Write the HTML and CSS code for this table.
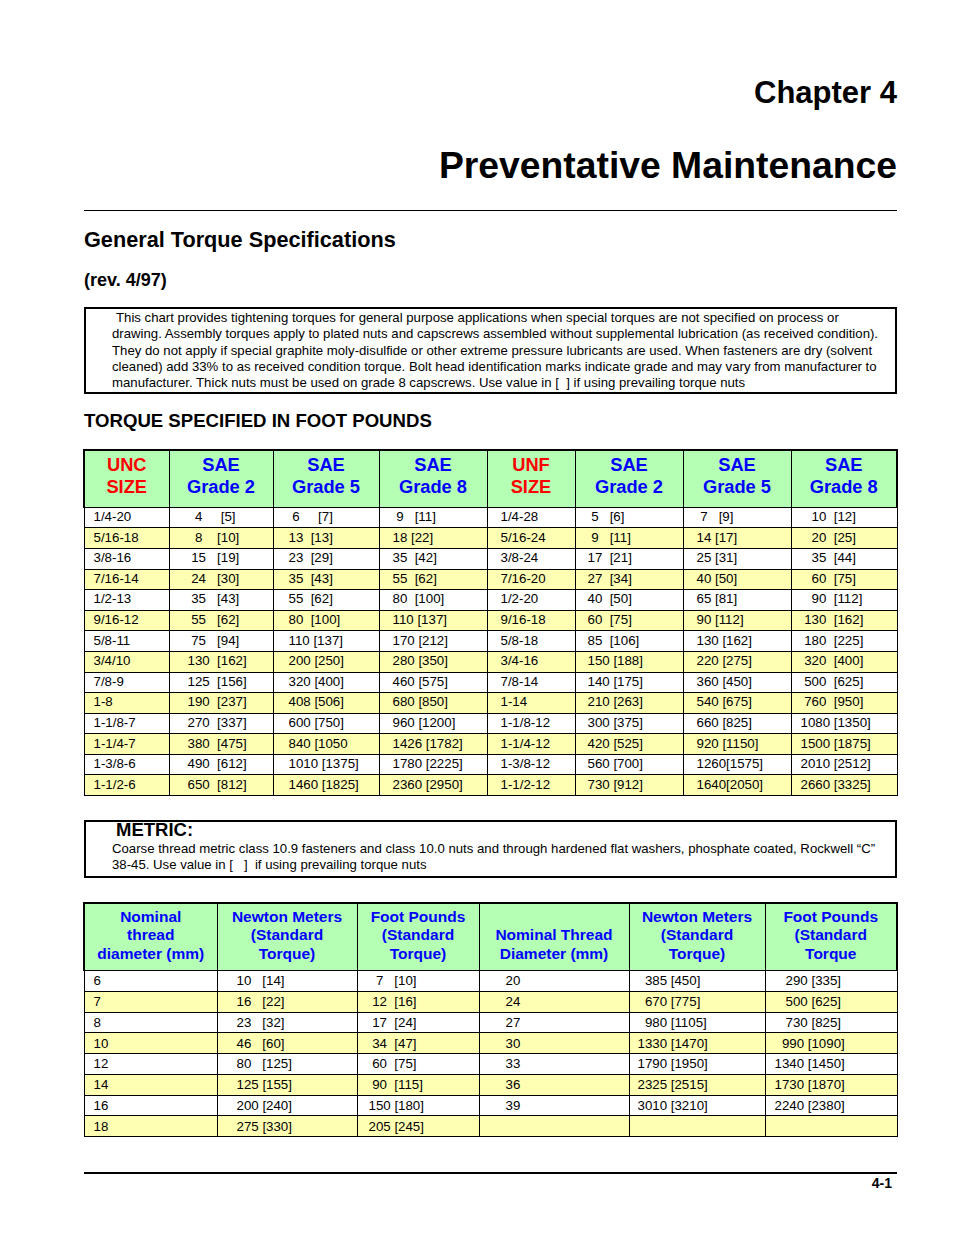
FILE: index.html
```html
<!DOCTYPE html>
<html lang="en">
<head>
<meta charset="utf-8">
<title>Chapter 4 - Preventative Maintenance</title>
<link rel="stylesheet" href="styles.css">
</head>
<body>
<div class="page">
  <header class="chapter-head">
    <div class="chapter">Chapter 4</div>
    <h1 class="title">Preventative Maintenance</h1>
  </header>
  <hr class="rule">
  <h2 class="section">General Torque Specifications</h2>
  <div class="rev">(rev. 4/97)</div>
  <div class="note">
    <p>This chart provides tightening torques for general purpose applications when special torques are not specified on process or<br>drawing. Assembly torques apply to plated nuts and capscrews assembled without supplemental lubrication (as received condition).<br>They do not apply if special graphite moly-disulfide or other extreme pressure lubricants are used. When fasteners are dry (solvent<br>cleaned) add 33% to as received condition torque. Bolt head identification marks indicate grade and may vary from manufacturer to<br>manufacturer. Thick nuts must be used on grade 8 capscrews. Use value in [&nbsp; ] if using prevailing torque nuts</p>
  </div>
  <h3 class="subhead">TORQUE SPECIFIED IN FOOT POUNDS</h3>

  <table class="torque t1">
    <colgroup>
      <col style="width:85px"><col style="width:104px"><col style="width:106px"><col style="width:108px">
      <col style="width:88px"><col style="width:108px"><col style="width:108px"><col style="width:106px">
    </colgroup>
    <thead>
      <tr>
        <th class="red">UNC<br>SIZE</th>
        <th>SAE<br>Grade 2</th>
        <th>SAE<br>Grade 5</th>
        <th>SAE<br>Grade 8</th>
        <th class="red">UNF<br>SIZE</th>
        <th>SAE<br>Grade 2</th>
        <th>SAE<br>Grade 5</th>
        <th>SAE<br>Grade 8</th>
      </tr>
    </thead>
    <tbody>
      <tr><td class="c1">1/4-20</td><td class="c2">  4     [5]</td><td class="c3"> 6     [7]</td><td class="c4"> 9   [11]</td><td class="c5">1/4-28</td><td class="c6"> 5   [6]</td><td class="c7"> 7   [9]</td><td class="c8">   10  [12]</td></tr>
      <tr><td class="c1">5/16-18</td><td class="c2">  8    [10]</td><td class="c3">13  [13]</td><td class="c4">18 [22]</td><td class="c5">5/16-24</td><td class="c6"> 9   [11]</td><td class="c7">14 [17]</td><td class="c8">   20  [25]</td></tr>
      <tr><td class="c1">3/8-16</td><td class="c2"> 15   [19]</td><td class="c3">23  [29]</td><td class="c4">35  [42]</td><td class="c5">3/8-24</td><td class="c6">17  [21]</td><td class="c7">25 [31]</td><td class="c8">   35  [44]</td></tr>
      <tr><td class="c1">7/16-14</td><td class="c2"> 24   [30]</td><td class="c3">35  [43]</td><td class="c4">55  [62]</td><td class="c5">7/16-20</td><td class="c6">27  [34]</td><td class="c7">40 [50]</td><td class="c8">   60  [75]</td></tr>
      <tr><td class="c1">1/2-13</td><td class="c2"> 35   [43]</td><td class="c3">55  [62]</td><td class="c4">80  [100]</td><td class="c5">1/2-20</td><td class="c6">40  [50]</td><td class="c7">65 [81]</td><td class="c8">   90  [112]</td></tr>
      <tr><td class="c1">9/16-12</td><td class="c2"> 55   [62]</td><td class="c3">80  [100]</td><td class="c4">110 [137]</td><td class="c5">9/16-18</td><td class="c6">60  [75]</td><td class="c7">90 [112]</td><td class="c8"> 130  [162]</td></tr>
      <tr><td class="c1">5/8-11</td><td class="c2"> 75   [94]</td><td class="c3">110 [137]</td><td class="c4">170 [212]</td><td class="c5">5/8-18</td><td class="c6">85  [106]</td><td class="c7">130 [162]</td><td class="c8"> 180  [225]</td></tr>
      <tr><td class="c1">3/4/10</td><td class="c2">130  [162]</td><td class="c3">200 [250]</td><td class="c4">280 [350]</td><td class="c5">3/4-16</td><td class="c6">150 [188]</td><td class="c7">220 [275]</td><td class="c8"> 320  [400]</td></tr>
      <tr><td class="c1">7/8-9</td><td class="c2">125  [156]</td><td class="c3">320 [400]</td><td class="c4">460 [575]</td><td class="c5">7/8-14</td><td class="c6">140 [175]</td><td class="c7">360 [450]</td><td class="c8"> 500  [625]</td></tr>
      <tr><td class="c1">1-8</td><td class="c2">190  [237]</td><td class="c3">408 [506]</td><td class="c4">680 [850]</td><td class="c5">1-14</td><td class="c6">210 [263]</td><td class="c7">540 [675]</td><td class="c8"> 760  [950]</td></tr>
      <tr><td class="c1">1-1/8-7</td><td class="c2">270  [337]</td><td class="c3">600 [750]</td><td class="c4">960 [1200]</td><td class="c5">1-1/8-12</td><td class="c6">300 [375]</td><td class="c7">660 [825]</td><td class="c8">1080 [1350]</td></tr>
      <tr><td class="c1">1-1/4-7</td><td class="c2">380  [475]</td><td class="c3">840 [1050</td><td class="c4">1426 [1782]</td><td class="c5">1-1/4-12</td><td class="c6">420 [525]</td><td class="c7">920 [1150]</td><td class="c8">1500 [1875]</td></tr>
      <tr><td class="c1">1-3/8-6</td><td class="c2">490  [612]</td><td class="c3">1010 [1375]</td><td class="c4">1780 [2225]</td><td class="c5">1-3/8-12</td><td class="c6">560 [700]</td><td class="c7">1260[1575]</td><td class="c8">2010 [2512]</td></tr>
      <tr><td class="c1">1-1/2-6</td><td class="c2">650  [812]</td><td class="c3">1460 [1825]</td><td class="c4">2360 [2950]</td><td class="c5">1-1/2-12</td><td class="c6">730 [912]</td><td class="c7">1640[2050]</td><td class="c8">2660 [3325]</td></tr>
    </tbody>
  </table>

  <div class="note metric">
    <div class="metric-title">METRIC:</div>
    <p>Coarse thread metric class 10.9 fasteners and class 10.0 nuts and through hardened flat washers, phosphate coated, Rockwell “C”<br>38-45. Use value in [&nbsp;&nbsp; ]&nbsp; if using prevailing torque nuts</p>
  </div>

  <table class="torque t2">
    <colgroup>
      <col style="width:133px"><col style="width:140px"><col style="width:122px">
      <col style="width:150px"><col style="width:136px"><col style="width:132px">
    </colgroup>
    <thead>
      <tr>
        <th>Nominal<br>thread<br>diameter (mm)</th>
        <th>Newton Meters<br>(Standard<br>Torque)</th>
        <th>Foot Pounds<br>(Standard<br>Torque)</th>
        <th>Nominal Thread<br>Diameter (mm)</th>
        <th>Newton Meters<br>(Standard<br>Torque)</th>
        <th>Foot Pounds<br>(Standard<br>Torque</th>
      </tr>
    </thead>
    <tbody>
      <tr><td class="m1">6</td><td class="m2">10   [14]</td><td class="m3">  7   [10]</td><td class="m4">20</td><td class="m5">  385 [450]</td><td class="m6">   290 [335]</td></tr>
      <tr><td class="m1">7</td><td class="m2">16   [22]</td><td class="m3"> 12  [16]</td><td class="m4">24</td><td class="m5">  670 [775]</td><td class="m6">   500 [625]</td></tr>
      <tr><td class="m1">8</td><td class="m2">23   [32]</td><td class="m3"> 17  [24]</td><td class="m4">27</td><td class="m5">  980 [1105]</td><td class="m6">   730 [825]</td></tr>
      <tr><td class="m1">10</td><td class="m2">46   [60]</td><td class="m3"> 34  [47]</td><td class="m4">30</td><td class="m5">1330 [1470]</td><td class="m6">  990 [1090]</td></tr>
      <tr><td class="m1">12</td><td class="m2">80   [125]</td><td class="m3"> 60  [75]</td><td class="m4">33</td><td class="m5">1790 [1950]</td><td class="m6">1340 [1450]</td></tr>
      <tr><td class="m1">14</td><td class="m2">125 [155]</td><td class="m3"> 90  [115]</td><td class="m4">36</td><td class="m5">2325 [2515]</td><td class="m6">1730 [1870]</td></tr>
      <tr><td class="m1">16</td><td class="m2">200 [240]</td><td class="m3">150 [180]</td><td class="m4">39</td><td class="m5">3010 [3210]</td><td class="m6">2240 [2380]</td></tr>
      <tr><td class="m1">18</td><td class="m2">275 [330]</td><td class="m3">205 [245]</td><td class="m4"></td><td class="m5"></td><td class="m6"></td></tr>
    </tbody>
  </table>

  <footer class="page-foot">
    <div class="page-num">4-1</div>
  </footer>
</div>
</body>
</html>
```
FILE: styles.css
```css
* { box-sizing: border-box; }

html, body {
  margin: 0;
  padding: 0;
  background: #ffffff;
}

body {
  font-family: "Liberation Sans", Arial, Helvetica, sans-serif;
  color: #000;
}

.page {
  width: 954px;
  padding: 76px 57px 0 84px;
}

.chapter-head {
  text-align: right;
}

.chapter {
  font-size: 31px;
  font-weight: bold;
  line-height: 34px;
}

.title {
  margin: 33px 0 0;
  font-size: 37.3px;
  font-weight: bold;
  line-height: 44px;
}

.rule {
  margin: 23px 0 0;
  border: 0;
  border-top: 1px solid #000;
  height: 0;
}

.section {
  margin: 16px 0 0;
  font-size: 21.7px;
  font-weight: bold;
  line-height: 26px;
}

.rev {
  margin-top: 16px;
  font-size: 18px;
  font-weight: bold;
  line-height: 22px;
}

.note {
  margin-top: 16px;
  border: 2px solid #000;
  padding: 1px 2px 1px 26px;
  font-size: 13.2px;
  line-height: 16.25px;
}

.note p {
  margin: 0;
  text-indent: 4px;
  white-space: nowrap;
}

.subhead {
  margin: 16px 0 0;
  font-size: 18.6px;
  font-weight: bold;
  line-height: 22px;
}

.torque {
  width: 813px;
  margin-left: -1px;
  border-collapse: collapse;
  table-layout: fixed;
  font-size: 13.3px;
}

.t1 { margin-top: 17px; }

.torque th {
  background: #b4ffb4;
  color: #0000ff;
  font-weight: bold;
  border: 1px solid #000;
  border-top: 2px solid #000;
  padding: 0;
  text-align: center;
  vertical-align: bottom;
}

.torque th:first-child { border-left: 2px solid #000; }
.torque th:last-child { border-right: 2px solid #000; }

.t1 th {
  height: 57px;
  font-size: 18.3px;
  line-height: 22px;
  padding-bottom: 9px;
}

.t1 th.red { color: #ff0000; }

.torque td {
  border: 1px solid #000;
  padding: 0 0 2px;
  white-space: pre;
  text-align: left;
  vertical-align: middle;
  line-height: 15px;
}

.t1 td { height: 20.6px; }
.t2 td { height: 20.75px; padding-bottom: 0; }

.torque tbody tr:nth-child(even) td { background: #ffffb4; }

.c1 { padding-left: 9px !important; }
.c2 { padding-left: 18px !important; }
.c3 { padding-left: 15px !important; }
.c4 { padding-left: 13px !important; }
.c5 { padding-left: 13px !important; }
.c6 { padding-left: 12px !important; }
.c7 { padding-left: 13px !important; }
.c8 { padding-left: 9px !important; }

.metric {
  margin-top: 24px;
  padding: 0 2px 2px 26px;
}

.metric-title {
  font-size: 18.5px;
  font-weight: bold;
  line-height: 15px;
  padding-left: 4px;
  margin-bottom: 4px;
}

.metric p { text-indent: 0; }

.t2 { margin-top: 24px; }

.t2 th {
  height: 68px;
  font-size: 15.5px;
  line-height: 18.5px;
  padding-bottom: 7px;
}

.m1 { padding-left: 9px !important; }
.m2 { padding-left: 19px !important; }
.m3 { padding-left: 11px !important; }
.m4 { padding-left: 26px !important; }
.m5 { padding-left: 8px !important; }
.m6 { padding-left: 9px !important; }

.page-foot {
  margin-top: 35px;
  border-top: 2px solid #000;
}

.page-num {
  text-align: right;
  padding-right: 5px;
  font-size: 14px;
  font-weight: bold;
  line-height: 16px;
  margin-top: 1px;
}
```
